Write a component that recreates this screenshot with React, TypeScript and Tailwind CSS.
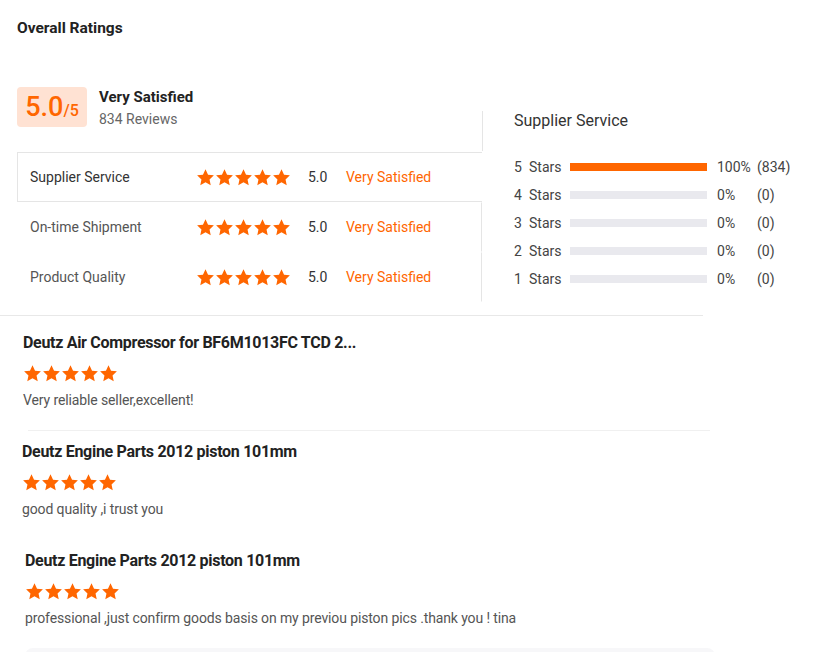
import React from 'react';

const Star = ({ size = 18 }: { size?: number }) => (
  <svg width={size} height={size} viewBox="0 0 24 24" className="shrink-0">
    <path
      d="M12 1.6l3.2 6.9 7.4.8-5.5 5.1 1.5 7.4L12 18.1l-6.6 3.7 1.5-7.4L1.4 9.3l7.4-.8z"
      fill="#ff6600"
    />
  </svg>
);

const Stars = ({ size = 19 }: { size?: number }) => (
  <div className="flex">
    {[0, 1, 2, 3, 4].map((i) => (
      <Star key={i} size={size} />
    ))}
  </div>
);

const categories = ['Supplier Service', 'On-time Shipment', 'Product Quality'];

const distribution = [
  { stars: 5, pct: 100, count: 834 },
  { stars: 4, pct: 0, count: 0 },
  { stars: 3, pct: 0, count: 0 },
  { stars: 2, pct: 0, count: 0 },
  { stars: 1, pct: 0, count: 0 },
];

const reviews = [
  {
    title: 'Deutz Air Compressor for BF6M1013FC TCD 2...',
    text: 'Very reliable seller,excellent!',
    wrap: 'pt-[17px] pb-[20px] ml-[28px] border-b border-[#f0f0f0]',
    inner: '-ml-[5px]',
  },
  {
    title: 'Deutz Engine Parts 2012 piston 101mm',
    text: 'good quality ,i trust you',
    wrap: 'pt-[11px] pb-[20px] ml-[22px] border-b border-transparent',
    inner: '',
  },
  {
    title: 'Deutz Engine Parts 2012 piston 101mm',
    text: 'professional ,just confirm goods basis on my previou piston pics .thank you ! tina',
    wrap: 'pt-[11px] pb-[20px] ml-[25px]',
    inner: '',
  },
];

export default function App() {
  return (
    <div className="w-[823px] h-[652px] overflow-hidden bg-white text-[#333] font-['Roboto',sans-serif]">
      <h3 className="pl-[17px] pt-[18px] text-[15.5px] font-bold text-[#222] leading-[20px]">Overall Ratings</h3>

      <div className="flex mt-[49px]">
        {/* left: summary + categories */}
        <div className="w-[482px] pl-[17px]">
          <div className="flex items-start gap-[12px]">
            <div className="w-[70px] h-[40px] rounded-[4px] bg-[#ffe2d3] flex items-baseline justify-center pt-[3px]">
              <span className="text-[27px] font-medium leading-[34px] text-[#ff6600]">5.0</span>
              <span className="text-[16px] font-medium text-[#ff6600]">/5</span>
            </div>
            <div className="pt-[1px]">
              <div className="text-[15px] font-bold text-[#222] leading-[18px]">Very Satisfied</div>
              <div className="text-[14px] text-[#666] leading-[18px] mt-[4px]">834 Reviews</div>
            </div>
          </div>

          <div className="mt-[24px]">
            {categories.map((c, i) => (
              <div
                key={c}
                className={`flex items-center h-[50px] pl-[12px] text-[14px] ${
                  i === 0
                    ? 'border border-r-0 border-[#e5e5e5] text-[#333]'
                    : 'border border-transparent border-r-[#e5e5e5] text-[#555]'
                }`}
              >
                <span className="w-[166px]">{c}</span>
                <Stars />
                <span className="ml-[17px] w-[38px] text-[#333]">5.0</span>
                <span className="text-[#ff6600]">Very Satisfied</span>
              </div>
            ))}
          </div>
        </div>

        {/* right: distribution */}
        <div className="flex-1 pl-[32px] pt-[24px] relative">
          <div className="absolute left-0 top-[24px] h-[40px] border-l border-[#e5e5e5]" />
          <div className="text-[16px] text-[#333] leading-[20px]">Supplier Service</div>
          <div className="mt-[27px] flex flex-col gap-[10px]">
            {distribution.map((d) => (
              <div key={d.stars} className="flex items-center h-[18px] text-[14px] text-[#444]">
                <span className="w-[15px]">{d.stars}</span>
                <span className="w-[41px]">Stars</span>
                <div className="w-[137px] h-[8px] bg-[#e9e9ee]">
                  <div className="h-full bg-[#ff6600]" style={{ width: `${d.pct}%` }} />
                </div>
                <span className="ml-[10px] w-[40px]">{d.pct}%</span>
                <span>({d.count})</span>
              </div>
            ))}
          </div>
        </div>
      </div>

      <div className="mt-[13px] w-[703px] border-t border-[#e8e8e8]" />

      <div className="w-[710px]">
        {reviews.map((r, i) => (
          <div key={i} className={r.wrap}>
            <div className={r.inner}>
              <div className="text-[16px] font-bold text-[#222] leading-[20px] tracking-[-0.3px]">{r.title}</div>
              <div className="mt-[11px]">
                <Stars />
              </div>
              <div className="mt-[7px] text-[14px] text-[#555] leading-[20px] tracking-[-0.12px]">{r.text}</div>
            </div>
          </div>
        ))}
        <div className="ml-[25px] w-[690px] h-[20px] rounded-[8px] bg-[#f7f7f9]" />
      </div>
    </div>
  );
}
